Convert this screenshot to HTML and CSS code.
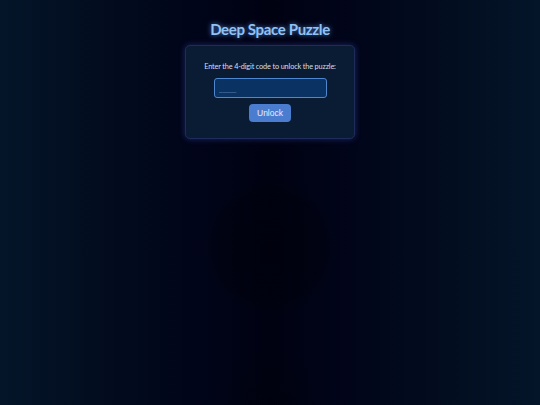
FILE: index.html
```html
<!DOCTYPE html>
<html>
<head>
<meta charset="utf-8">
<link rel="stylesheet" href="styles.css">
</head>
<body>
<main class="page">
  <h1 class="title">Deep Space Puzzle</h1>
  <section class="panel">
    <p class="prompt">Enter the 4-digit code to unlock the puzzle:</p>
    <input class="code" type="text" placeholder="____">
    <button class="unlock">Unlock</button>
  </section>
</main>
</body>
</html>
```
FILE: styles.css
```css
html, body {
  margin: 0;
  height: 100%;
}
body {
  background:
    radial-gradient(circle 68px at 50% 61%, rgba(0, 0, 6, 0.35) 0%, rgba(0, 0, 6, 0.25) 80%, rgba(0, 0, 6, 0) 100%),
    radial-gradient(circle 60px at 50% 100%, rgba(0, 0, 8, 0.3) 0%, rgba(0, 0, 8, 0) 100%),
    linear-gradient(to right, #041529 0%, #020c1e 20%, #01051a 35%, #000212 50%, #01051a 65%, #020c1e 80%, #041529 100%);
  font-family: Lato, "DejaVu Sans", sans-serif;
  color: #dde6f2;
}
.page {
  display: flex;
  flex-direction: column;
  align-items: center;
  padding-top: 19px;
}
.title {
  margin: 0;
  font-size: 15px;
  letter-spacing: -0.35px;
  font-weight: bold;
  color: #92c2f3;
  text-shadow: 0 0 5px rgba(90, 160, 255, 0.8);
  line-height: 20px;
}
.panel {
  margin-top: 6px;
  width: 170px;
  height: 94px;
  box-sizing: border-box;
  background: #0a1b34;
  border: 1px solid #1d2c5a;
  border-radius: 5px;
  box-shadow: 0 0 6px rgba(70, 90, 210, 0.4);
  display: flex;
  flex-direction: column;
  align-items: center;
  padding-top: 16px;
}
.prompt {
  margin: 0;
  font-size: 7.3px;
  letter-spacing: -0.14px;
  line-height: 10px;
  color: #d6dfeb;
}
.code {
  margin-top: 6px;
  width: 113px;
  height: 20px;
  box-sizing: border-box;
  background: #0a3262;
  border: 1px solid #4f86d0;
  border-radius: 3px;
  padding: 0 4px;
  font-size: 8px;
  color: #e0ecff;
  outline: none;
}
.code::placeholder {
  color: #5d7fae;
}
.unlock {
  margin-top: 6px;
  width: 42px;
  height: 18px;
  border: none;
  border-radius: 4px;
  background: #4a7dd0;
  color: #e6efff;
  font-family: "Liberation Sans", Arial, sans-serif;
  font-size: 8.5px;
  padding: 0;
}
```
